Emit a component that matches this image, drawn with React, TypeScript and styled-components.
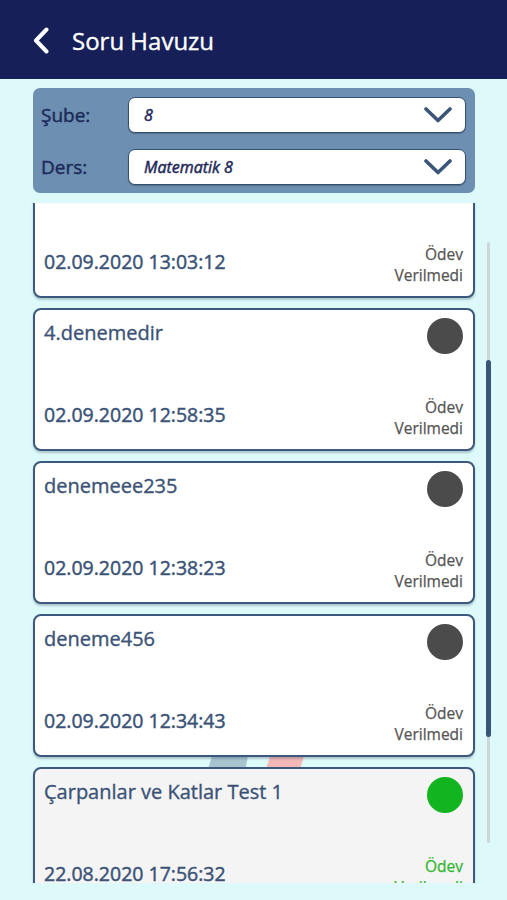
import React from 'react';
import styled, { createGlobalStyle } from 'styled-components';

const GlobalStyle = createGlobalStyle`
  html, body {
    margin: 0;
    padding: 0;
    background: #ddf9f9;
    font-family: 'Open Sans', 'Noto Sans', sans-serif;
  }
  * {
    box-sizing: border-box;
  }
`;

const Page = styled.div`
  width: 507px;
  height: 900px;
  display: flex;
  flex-direction: column;
  background: #ddf9f9;
  overflow: hidden;
`;

const Header = styled.header`
  height: 79px;
  flex-shrink: 0;
  background: #161f57;
  display: flex;
  align-items: center;
  padding: 2px 0 0 33px;
  gap: 23px;
`;

const Title = styled.h1`
  margin: 0;
  color: #ffffff;
  font-size: 24px;
  font-weight: 400;
  -webkit-text-stroke: 0.35px #ffffff;
  line-height: 1;
`;

const Content = styled.div`
  display: flex;
  flex-direction: column;
  padding-top: 9px;
`;

const FilterPanel = styled.div`
  margin: 0 32px 0 33px;
  background: #6d8fb1;
  border-radius: 7px;
  padding: 9px 8px 8px 8px;
  display: flex;
  flex-direction: column;
  gap: 16px;
`;

const FilterRow = styled.div`
  display: flex;
  align-items: center;
`;

const Label = styled.span`
  width: 87px;
  color: #1c2a5a;
  font-size: 19px;
  font-weight: 400;
  -webkit-text-stroke: 0.45px #1c2a5a;
`;

const Select = styled.div`
  width: 338px;
  height: 36px;
  background: #ffffff;
  border: 1.5px solid #34506f;
  border-radius: 7px;
  display: flex;
  align-items: center;
  justify-content: space-between;
  padding: 0 13px 0 15px;
  box-shadow: 0 1px 1px rgba(0, 0, 0, 0.25);
`;

const SelectText = styled.span`
  color: #1f2a5a;
  font-size: 16px;
  font-style: italic;
  font-weight: 400;
  -webkit-text-stroke: 0.5px #1f2a5a;
`;

const ListViewport = styled.div`
  position: relative;
  margin-top: 10px;
  height: 680px;
  overflow: hidden;
  padding: 0 32px 0 33px;
`;

const List = styled.div`
  margin-top: -48px;
  display: flex;
  flex-direction: column;
  gap: 10px;
`;

const Card = styled.div<{ $done?: boolean }>`
  position: relative;
  z-index: 1;
  height: 143px;
  background: ${({ $done }) => ($done ? '#f4f4f4' : '#ffffff')};
  border: 2px solid #3c587c;
  border-radius: 8px;
  box-shadow: 0 2px 2px rgba(30, 50, 80, 0.25);
  padding: 8px 10px 10px 9px;
  display: flex;
  flex-direction: column;
  justify-content: space-between;
`;

const CardTop = styled.div`
  display: flex;
  justify-content: space-between;
  align-items: flex-start;
`;

const CardTitle = styled.div`
  margin-top: 1px;
  color: #3b5276;
  font-size: 20px;
  font-weight: 400;
  -webkit-text-stroke: 0.35px #3b5276;
  line-height: 27px;
`;

const Dot = styled.div<{ $done?: boolean }>`
  width: 36px;
  height: 36px;
  border-radius: 50%;
  background: ${({ $done }) => ($done ? '#12b420' : '#4b4b4b')};
`;

const CardBottom = styled.div`
  display: flex;
  justify-content: space-between;
  align-items: flex-start;
`;

const DateText = styled.div`
  margin-top: 11px;
  color: #3a5276;
  font-size: 19.5px;
  font-weight: 400;
  -webkit-text-stroke: 0.45px #3a5276;
  line-height: 20px;
`;

const Status = styled.div<{ $done?: boolean }>`
  margin-top: 3px;
  text-align: right;
  color: ${({ $done }) => ($done ? '#2fb52f' : '#555555')};
  font-size: 15.5px;
  font-weight: 400;
  -webkit-text-stroke: 0.25px ${({ $done }) => ($done ? '#2fb52f' : '#555555')};
  line-height: 21px;
`;

const Watermark = styled.svg`
  position: absolute;
  left: 200px;
  top: 553px;
  z-index: 0;
`;

const ScrollTrack = styled.div`
  position: absolute;
  right: 17px;
  top: 39px;
  width: 3px;
  height: 601px;
  border-radius: 2px;
  background: #cfd6d9;
`;

const ScrollThumb = styled.div`
  position: absolute;
  right: 16px;
  top: 157px;
  width: 5px;
  height: 377px;
  border-radius: 3px;
  background: #375577;
`;

const BackIcon = () => (
  <svg width="16" height="27" viewBox="0 0 16 27">
    <polyline
      points="13.5,2.5 3,13.5 13.5,24.5"
      fill="none"
      stroke="#ffffff"
      strokeWidth="4"
      strokeLinecap="round"
      strokeLinejoin="round"
    />
  </svg>
);

const Chevron = () => (
  <svg width="28" height="16" viewBox="0 0 28 16">
    <polyline
      points="2,2 14,13.5 26,2"
      fill="none"
      stroke="#3a5577"
      strokeWidth="3.6"
      strokeLinecap="round"
      strokeLinejoin="round"
    />
  </svg>
);

type TItem = {
  title: string;
  date: string;
  done?: boolean;
};

const items: TItem[] = [
  { title: '', date: '02.09.2020 13:03:12' },
  { title: '4.denemedir', date: '02.09.2020 12:58:35' },
  { title: 'denemeee235', date: '02.09.2020 12:38:23' },
  { title: 'deneme456', date: '02.09.2020 12:34:43' },
  { title: 'Çarpanlar ve Katlar Test 1', date: '22.08.2020 17:56:32', done: true }
];

const App: React.FC = () => {
  return (
    <Page>
      <GlobalStyle />
      <Header>
        <BackIcon />
        <Title>Soru Havuzu</Title>
      </Header>
      <Content>
        <FilterPanel>
          <FilterRow>
            <Label>Şube:</Label>
            <Select>
              <SelectText>8</SelectText>
              <Chevron />
            </Select>
          </FilterRow>
          <FilterRow>
            <Label>Ders:</Label>
            <Select>
              <SelectText>Matematik 8</SelectText>
              <Chevron />
            </Select>
          </FilterRow>
        </FilterPanel>
        <ListViewport>
          <Watermark width="110" height="60" viewBox="0 0 110 60">
            <polygon points="12,0 48,0 40,40 0,40" fill="#a8c4cf" />
            <polygon points="70,0 104,0 92,40 58,40" fill="#f3b9b8" />
          </Watermark>
          <List>
            {items.map((item) => (
              <Card key={item.date} $done={item.done}>
                <CardTop>
                  <CardTitle>{item.title}</CardTitle>
                  <Dot $done={item.done} />
                </CardTop>
                <CardBottom>
                  <DateText>{item.date}</DateText>
                  <Status $done={item.done}>
                    Ödev
                    <br />
                    Verilmedi
                  </Status>
                </CardBottom>
              </Card>
            ))}
          </List>
          <ScrollTrack />
          <ScrollThumb />
        </ListViewport>
      </Content>
    </Page>
  );
};

export default App;
